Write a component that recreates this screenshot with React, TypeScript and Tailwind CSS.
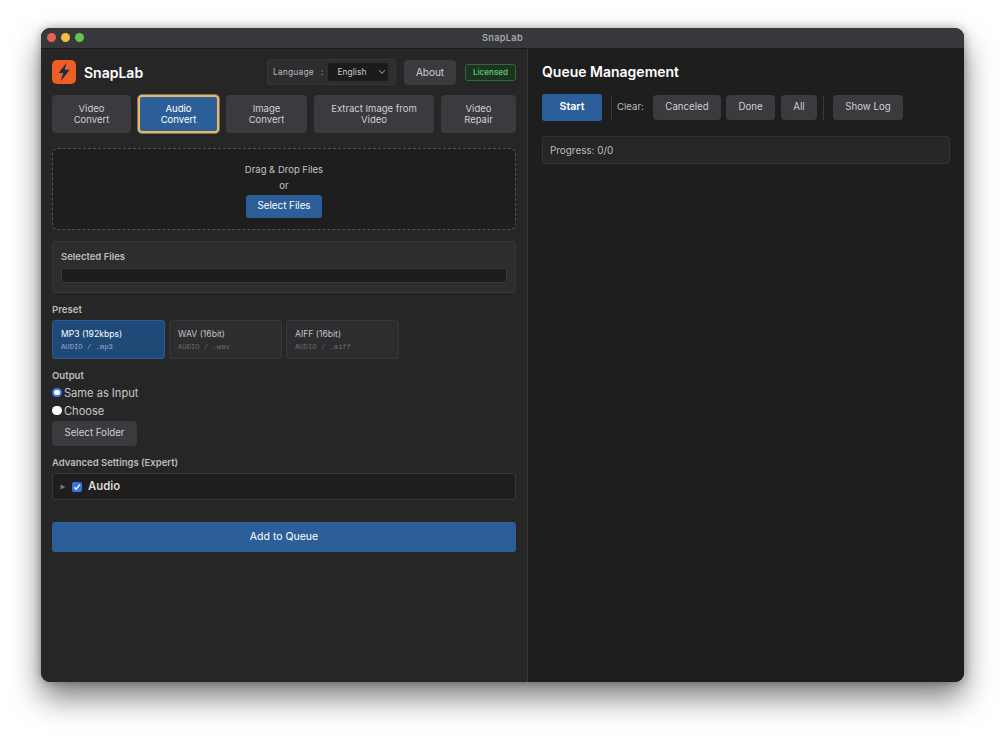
import React from "react";

function Bolt() {
  return (
    <div className="w-[24px] h-[24px] rounded-[5px] bg-[#ee5f27] flex items-center justify-center">
      <svg width="14" height="20" viewBox="0 0 14 20">
        <path d="M9.8 0.5 L1.6 11 L6.2 11 L3.6 19.5 L12.6 7.8 L7.6 7.8 Z" fill="#1d2a3f" />
      </svg>
    </div>
  );
}

const btn = "bg-[#3a3a3f] text-[#d0d0d0] rounded-[4px] flex items-center justify-center text-center";

function Tab({ w, children, active }: { w: string; children: React.ReactNode; active?: boolean }) {
  return (
    <div
      className={
        active
          ? `${w} h-[38px] rounded-[4px] bg-[#2c5f99] text-white border-2 border-[#f0b65a] text-[9.5px] leading-[11.5px] flex items-center justify-center text-center outline outline-1 outline-[#e8e8e8]/40`
          : `${w} h-[38px] ${btn} text-[9.5px] leading-[11.5px]`
      }
    >
      <span>{children}</span>
    </div>
  );
}

function Preset({ title, sub, active }: { title: string; sub: string; active?: boolean }) {
  return (
    <div
      className={`w-[113px] h-[39px] rounded-[3px] border pl-[8px] pt-[7px] ${
        active ? "bg-[#1f4a78] border-[#2a5c93]" : "bg-[#2d2d30] border-[#38383b]"
      }`}
    >
      <div className={`text-[8.6px] leading-[13px] ${active ? "text-white" : "text-[#c4c4c4]"}`}>{title}</div>
      <div
        className={`text-[7.2px] leading-[10px] mt-[1px] font-['Liberation_Mono',monospace] ${
          active ? "text-[#93aeca]" : "text-[#6c6c6c]"
        }`}
      >
        {sub}
      </div>
    </div>
  );
}

export default function App() {
  return (
    <div className="w-[1005px] h-[736px] bg-white overflow-hidden pt-[28px] pl-[41px] font-['Inter',sans-serif]">
      <div className="w-[923px] h-[654px] rounded-[9px] overflow-hidden flex flex-col bg-[#262626] shadow-[0_16px_30px_rgba(0,0,0,0.5),0_0_10px_rgba(0,0,0,0.3)]">
        <div className="h-[21px] shrink-0 bg-[#36383c] border-b border-[#1a1a1a] flex items-center justify-center relative">
          <div className="absolute left-[6px] top-[5px] flex gap-[5px]">
            <div className="w-[9px] h-[9px] rounded-full bg-[#ec5f55]" />
            <div className="w-[9px] h-[9px] rounded-full bg-[#f4bd3c]" />
            <div className="w-[9px] h-[9px] rounded-full bg-[#5fc64e]" />
          </div>
          <span className="text-[9.2px] font-semibold tracking-[0.3px] text-[#a6a7a9]">SnapLab</span>
        </div>
        <div className="flex-1 flex min-h-0">
          <div className="w-[487px] shrink-0 bg-[#262626] border-r border-[#3a3a3a] px-[11px] flex flex-col">
            <div className="h-[24px] mt-[11px] flex items-center">
              <Bolt />
              <span className="ml-[8px] text-[14px] font-semibold text-white">SnapLab</span>
              <div className="ml-auto flex items-center">
                <div className="w-[129px] h-[26px] rounded-[3px] bg-[#2e2e31] border border-[#36363a] flex items-center pl-[5px]">
                  <span className="w-[40px] text-[8.4px] text-[#b8b8b8] tracking-[0.2px] whitespace-nowrap">Language</span>
                  <span className="text-[8.5px] text-[#b8b8b8] ml-[8px]">:</span>
                  <div className="ml-[5px] w-[60px] h-[18px] rounded-[3px] bg-[#1b1b1b] flex items-center pl-[9px] relative">
                    <span className="text-[8.5px] text-[#c8c8c8]">English</span>
                    <svg className="absolute right-[2px] top-[6px]" width="8" height="6" viewBox="0 0 8 6">
                      <path d="M1 1.2 L4 4.4 L7 1.2" fill="none" stroke="#aaa" strokeWidth="1" />
                    </svg>
                  </div>
                </div>
                <div className={`ml-[8px] w-[52px] h-[25px] ${btn} text-[10px]`}>About</div>
                <div className="ml-[9px] w-[51px] h-[17px] rounded-[3px] bg-[#1d3220] border border-[#2f6a37] text-[#58c66b] text-[8px] font-semibold flex items-center justify-center">
                  Licensed
                </div>
              </div>
            </div>
            <div className="mt-[11px] flex gap-[7px]">
              <Tab w="w-[79px]">Video<br />Convert</Tab>
              <Tab w="w-[81px]" active>Audio<br />Convert</Tab>
              <Tab w="w-[81px]">Image<br />Convert</Tab>
              <Tab w="w-[120px]">Extract Image from<br />Video</Tab>
              <Tab w="w-[75px]">Video<br />Repair</Tab>
            </div>
            <div className="mt-[15px] h-[82px] rounded-[6px] border border-dashed border-[#555] bg-[#1e1e1e] flex flex-col items-center pt-[14px]">
              <div className="text-[9.5px] leading-[13px] text-[#c4c4c4]">Drag &amp; Drop Files</div>
              <div className="text-[9.5px] leading-[13px] mt-[3px] text-[#c4c4c4]">or</div>
              <div className="mt-[3px] w-[76px] h-[23px] rounded-[3px] bg-[#2c5f99] text-white text-[9.8px] flex items-center justify-center">
                Select Files
              </div>
            </div>
            <div className="mt-[11px] h-[52px] rounded-[3px] bg-[#2d2d30] border border-[#38383b] px-[8px] pt-[8px]">
              <div className="text-[9.5px] leading-[13px] font-semibold text-[#bdbdbd]">Selected Files</div>
              <div className="mt-[5px] h-[15px] rounded-[3px] bg-[#1c1c1c] border border-[#38383b]" />
            </div>
            <div className="mt-[10px] text-[9.6px] leading-[13px] font-semibold text-[#bdbdbd]">Preset</div>
            <div className="mt-[4px] flex gap-[4px]">
              <Preset title="MP3 (192kbps)" sub="AUDIO / .mp3" active />
              <Preset title="WAV (16bit)" sub="AUDIO / .wav" />
              <Preset title="AIFF (16bit)" sub="AUDIO / .aiff" />
            </div>
            <div className="mt-[10px] text-[9.6px] leading-[13px] font-semibold text-[#bdbdbd]">Output</div>
            <div className="mt-[4px] h-[14px] flex items-center">
              <div className="w-[9.5px] h-[9.5px] rounded-full bg-white border-[2.5px] border-[#3b78f2] -mt-[1px]" />
              <span className="ml-[2.5px] text-[11.1px] text-[#c8c8c8]">Same as Input</span>
            </div>
            <div className="mt-[4px] h-[14px] flex items-center">
              <div className="w-[9.5px] h-[9.5px] rounded-full bg-white -mt-[1px]" />
              <span className="ml-[2.5px] text-[11.1px] text-[#c8c8c8]">Choose</span>
            </div>
            <div className={`mt-[3px] w-[85px] h-[25px] ${btn} text-[9.7px]`}>Select Folder</div>
            <div className="mt-[10px] text-[9.5px] leading-[13px] font-semibold text-[#bdbdbd]">Advanced Settings (Expert)</div>
            <div className="mt-[4px] h-[27px] rounded-[3px] bg-[#1e1e1e] border border-[#38383b] flex items-center pl-[7px]">
              <svg width="6" height="6" viewBox="0 0 6 6">
                <path d="M0.5 0.5 L5.5 3 L0.5 5.5 Z" fill="#777" />
              </svg>
              <div className="ml-[6px] w-[10px] h-[10px] rounded-[2px] bg-[#3a6fe8] flex items-center justify-center">
                <svg width="8" height="8" viewBox="0 0 8 8">
                  <path d="M1.3 4.2 L3.2 6.2 L6.8 1.6" fill="none" stroke="#fff" strokeWidth="1.4" />
                </svg>
              </div>
              <span className="ml-[6px] text-[11.3px] font-semibold text-[#d8d8d8]">Audio</span>
            </div>
            <div className="mt-[22px] h-[30px] rounded-[3px] bg-[#2c5f99] text-white text-[10.5px] flex items-center justify-center">
              Add to Queue
            </div>
          </div>
          <div className="flex-1 bg-[#1e1e1e] pl-[14px] pr-[14px]">
            <div className="mt-[12px] h-[20px] flex items-center text-[14px] font-semibold text-white">Queue Management</div>
            <div className="mt-[13px] flex items-center h-[27px]">
              <div className="w-[60px] h-[27px] rounded-[3px] bg-[#2c5f99] text-white text-[10.7px] font-semibold flex items-center justify-center">
                Start
              </div>
              <div className="ml-[9px] w-px h-[25px] bg-[#38383a]" />
              <span className="ml-[5px] w-[27px] whitespace-nowrap text-[9.6px] text-[#bdbdbd]">Clear:</span>
              <div className={`ml-[9px] w-[68px] h-[25px] ${btn} text-[9.7px]`}>Canceled</div>
              <div className={`ml-[5px] w-[49px] h-[25px] ${btn} text-[9.7px]`}>Done</div>
              <div className={`ml-[6px] w-[36px] h-[25px] ${btn} text-[9.7px]`}>All</div>
              <div className={`ml-[6px] w-px h-[25px] bg-[#38383a]`} />
              <div className={`ml-[9px] w-[70px] h-[25px] ${btn} text-[9.7px]`}>Show Log</div>
            </div>
            <div className="mt-[15px] h-[28px] rounded-[3px] bg-[#262626] border border-[#343436] pl-[7px] flex items-center text-[9.9px] text-[#bdbdbd]">
              Progress: 0/0
            </div>
          </div>
        </div>
      </div>
    </div>
  );
}
